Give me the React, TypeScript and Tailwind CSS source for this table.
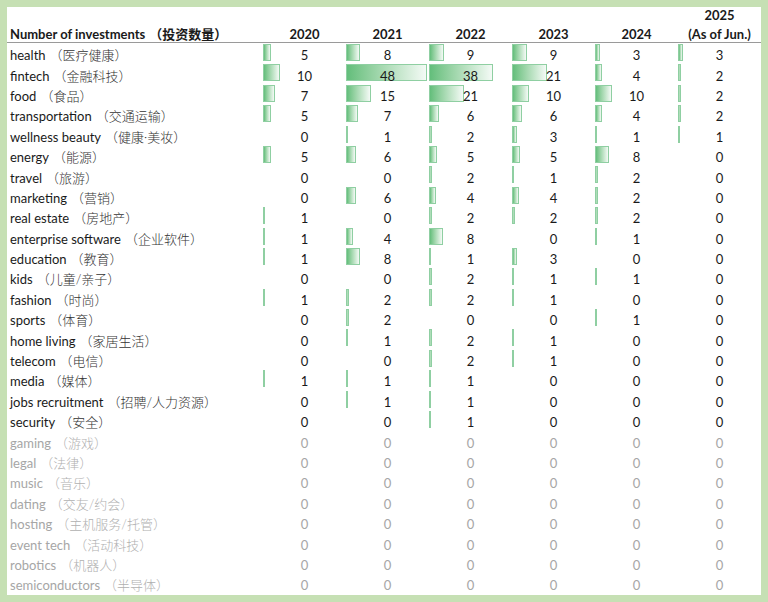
import React from 'react';

type Row = { label: string; zh: string; values: number[]; muted?: boolean };

const rows: Row[] = [
  { label: 'health', zh: '（医疗健康）', values: [5, 8, 9, 9, 3, 3] },
  { label: 'fintech', zh: '（金融科技）', values: [10, 48, 38, 21, 4, 2] },
  { label: 'food', zh: '（食品）', values: [7, 15, 21, 10, 10, 2] },
  { label: 'transportation', zh: '（交通运输）', values: [5, 7, 6, 6, 4, 2] },
  { label: 'wellness beauty', zh: '（健康·美妆）', values: [0, 1, 2, 3, 1, 1] },
  { label: 'energy', zh: '（能源）', values: [5, 6, 5, 5, 8, 0] },
  { label: 'travel', zh: '（旅游）', values: [0, 0, 2, 1, 2, 0] },
  { label: 'marketing', zh: '（营销）', values: [0, 6, 4, 4, 2, 0] },
  { label: 'real estate', zh: '（房地产）', values: [1, 0, 2, 2, 2, 0] },
  { label: 'enterprise software', zh: '（企业软件）', values: [1, 4, 8, 0, 1, 0] },
  { label: 'education', zh: '（教育）', values: [1, 8, 1, 3, 0, 0] },
  { label: 'kids', zh: '（儿童/亲子）', values: [0, 0, 2, 1, 1, 0] },
  { label: 'fashion', zh: '（时尚）', values: [1, 2, 2, 1, 0, 0] },
  { label: 'sports', zh: '（体育）', values: [0, 2, 0, 0, 1, 0] },
  { label: 'home living', zh: '（家居生活）', values: [0, 1, 2, 1, 0, 0] },
  { label: 'telecom', zh: '（电信）', values: [0, 0, 2, 1, 0, 0] },
  { label: 'media', zh: '（媒体）', values: [1, 1, 1, 0, 0, 0] },
  { label: 'jobs recruitment', zh: '（招聘/人力资源）', values: [0, 1, 1, 0, 0, 0] },
  { label: 'security', zh: '（安全）', values: [0, 0, 1, 0, 0, 0] },
  { label: 'gaming', zh: '（游戏）', values: [0, 0, 0, 0, 0, 0], muted: true },
  { label: 'legal', zh: '（法律）', values: [0, 0, 0, 0, 0, 0], muted: true },
  { label: 'music', zh: '（音乐）', values: [0, 0, 0, 0, 0, 0], muted: true },
  { label: 'dating', zh: '（交友/约会）', values: [0, 0, 0, 0, 0, 0], muted: true },
  { label: 'hosting', zh: '（主机服务/托管）', values: [0, 0, 0, 0, 0, 0], muted: true },
  { label: 'event tech', zh: '（活动科技）', values: [0, 0, 0, 0, 0, 0], muted: true },
  { label: 'robotics', zh: '（机器人）', values: [0, 0, 0, 0, 0, 0], muted: true },
  { label: 'semiconductors', zh: '（半导体）', values: [0, 0, 0, 0, 0, 0], muted: true },
];

const MAX = 48;
const BAR_MAX = 81;

function Cell({ value, muted }: { value: number; muted?: boolean }) {
  return (
    <div className="relative flex items-center justify-center h-[20.4px]">
      {value > 0 && (
        <div
          className="absolute left-0 top-[1px] h-[17px] border border-[#8fcfa2] bg-gradient-to-r from-[#63be7b] to-[#f4faf6]"
          style={{ width: Math.max(2, (value / MAX) * BAR_MAX) }}
        />
      )}
      <span className={`relative mt-[5px] ${muted ? 'text-[#a6a6a6]' : 'text-[#1a1a1a]'}`}>{value}</span>
    </div>
  );
}

export default function App() {
  return (
    <div className="w-[768px] h-[602px] bg-[#c6e0b4] p-[7px] font-['Lato','Noto_Sans_CJK_SC',sans-serif] text-[13px] leading-none">
      <div className="w-full h-full bg-white">
        <div className="grid grid-cols-[256px_repeat(6,83px)] h-[36px] border-b border-[#9a9a9a] font-bold text-[#1a1a1a]">
          <div className="flex items-end pl-[3px] pb-[1px]">
            Number of investments <span className="ml-[4px] font-bold">（投资数量）</span>
          </div>
          {['2020', '2021', '2022', '2023', '2024'].map((y) => (
            <div key={y} className="flex items-end justify-center pb-[1px]">
              {y}
            </div>
          ))}
          <div className="flex flex-col items-center justify-end pb-[1px] gap-[6px]">
            <span>2025</span>
            <span>(As of Jun.)</span>
          </div>
        </div>
        {rows.map((r) => (
          <div key={r.label} className="grid grid-cols-[256px_repeat(6,83px)]">
            <div className={`flex items-center pl-[3px] pt-[5px] h-[20.4px] ${r.muted ? 'text-[#a6a6a6]' : 'text-[#1a1a1a]'}`}>
              <span>{r.label}</span>
              <span className={`ml-[4px] font-light ${r.muted ? 'text-[#b0b0b0]' : 'text-[#333]'}`}>{r.zh}</span>
            </div>
            {r.values.map((v, i) => (
              <Cell key={i} value={v} muted={r.muted} />
            ))}
          </div>
        ))}
      </div>
    </div>
  );
}
